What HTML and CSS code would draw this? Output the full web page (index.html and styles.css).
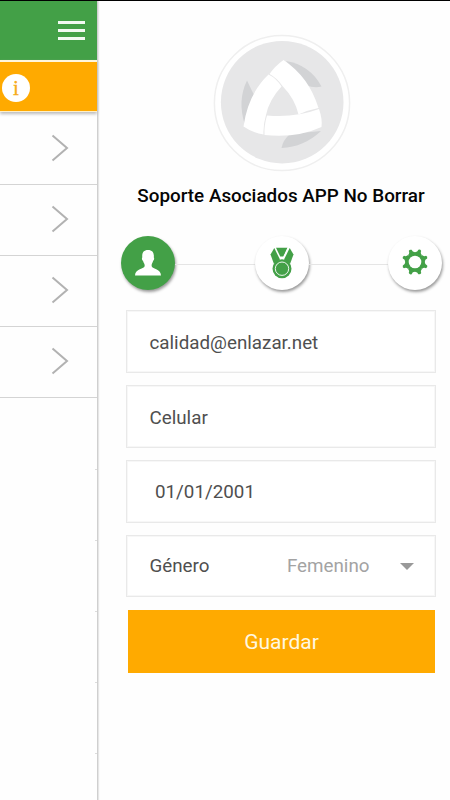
FILE: index.html
```html
<!DOCTYPE html>
<html lang="es">
<head>
<meta charset="utf-8">
<title>Perfil</title>
<link rel="stylesheet" href="styles.css">
</head>
<body>
<div class="app">
  <aside class="page">
    <header class="topbar">
      <div class="menu"><span></span><span></span><span></span></div>
    </header>
    <div class="notice"><span class="info">i</span></div>
    <ul class="list">
      <li><svg width="18" height="28" viewBox="0 0 18 28"><path d="M1.500 1.500 16 14 1.500 26.500"/></svg></li>
      <li><svg width="18" height="28" viewBox="0 0 18 28"><path d="M1.500 1.500 16 14 1.500 26.500"/></svg></li>
      <li><svg width="18" height="28" viewBox="0 0 18 28"><path d="M1.500 1.500 16 14 1.500 26.500"/></svg></li>
      <li><svg width="18" height="28" viewBox="0 0 18 28"><path d="M1.500 1.500 16 14 1.500 26.500"/></svg></li>
    </ul>
    <div class="ticks"><i></i><i></i><i></i><i></i><i></i></div>
  </aside>
  <main class="panel">
    <svg class="avatar" width="140" height="140" viewBox="0 0 140 140">
      <circle cx="70" cy="70" r="67.600" fill="#fff" stroke="#efefef" stroke-width="1.500"/>
      <circle cx="70.200" cy="69.200" r="61.300" fill="#e7e7e8"/>
      <g fill="#d2d3d5">
        <path d="M74 28Q98 32 109.500 53.500Q102 55.500 94 52Z"/>
        <path d="M35 47.500L42 62L33 92Q25 68 35 47.500Z"/>
        <path d="M109 98Q92 114 69.500 115Q71 107 78 101Z"/>
      </g>
      <g fill="#fff">
        <path d="M57.500 41Q63 33 71.500 27Q97 44 106.500 75Q96 77 86.500 81.500Q83 66 70.500 53Q65 45 57.500 41Z"/>
        <path d="M56.500 41.500Q64 45 69.500 53.500Q57 67 54 82Q51 92 51.500 101.500Q41 100 31.500 93.500Q36 61 56.500 41.500Z"/>
        <path d="M55 82.500Q83 85 107 76Q110.500 86 109.500 94Q84 105.500 52.500 102Q52 92 55 82.500Z"/>
      </g>
    </svg>
    <h1>Soporte Asociados APP No Borrar</h1>
    <nav class="steps">
      <div class="step active">
        <svg width="28" height="28" viewBox="0 0 28 28" fill="#fff"><path d="M14 1C18.500 1 20.300 3.900 19.800 8.500C20.600 9 19.900 11.300 19.100 11.800C18.600 14 17.600 14.700 17.600 16.700C17.600 20.500 27 19 27 26.500H1C1 19 10.700 20.500 10.700 16.700C10.700 14.700 9.500 14 9 11.800C8.100 11.300 7.500 9 8.300 8.500C7.800 3.900 9.500 1 14 1Z"/></svg>
      </div>
      <span class="line"></span>
      <div class="step">
        <svg width="24" height="32" viewBox="0 0 24 32" fill="#43a047"><path d="M4.300 1 10 12.500 4 17 .5 7.500Z"/><path d="M19.700 1 14 12.500 20 17 23.500 7.500Z"/><path d="M6 .8H17.500L13.300 9.500H10.200Z"/><path d="M13.700 10.500 18 1" stroke="#fff"/><circle cx="12" cy="21.700" r="9.500"/><circle cx="12" cy="21.700" r="6.700" fill="none" stroke="#fff" stroke-width=".9"/></svg>
      </div>
      <span class="line"></span>
      <div class="step gear">
        <svg width="26" height="26" viewBox="-13 -13 26 26"><g fill="#43a047"><circle r="9"/><path id="tooth" d="M0 0H9.800Q9.800 2.600 12.200 3.400Q12.900 5.200 11 6.200Q8.800 5.100 6.900 6.900Z"/><use href="#tooth" transform="rotate(45)"/><use href="#tooth" transform="rotate(90)"/><use href="#tooth" transform="rotate(135)"/><use href="#tooth" transform="rotate(180)"/><use href="#tooth" transform="rotate(225)"/><use href="#tooth" transform="rotate(270)"/><use href="#tooth" transform="rotate(315)"/></g><circle r="6.300" fill="#fff"/></svg>
      </div>
    </nav>
    <form class="form">
      <div class="field">calidad@enlazar.net</div>
      <div class="field phone">Celular</div>
      <div class="field date">01/01/2001</div>
      <div class="field gender"><span>Género</span><span class="value">Femenino</span><i class="caret"></i></div>
      <button type="button">Guardar</button>
    </form>
  </main>
</div>
</body>
</html>
```
FILE: styles.css
```css
* { box-sizing: border-box; }
body { margin: 0; background: #fefefe; font-family: Roboto, sans-serif; }
.app { display: flex; width: 450px; height: 800px; overflow: hidden; border-top: 1px solid #000; }

.page { width: 98px; border-right: 1px solid #cfcfcf; box-shadow: 1px 0 1px #e6e6e6; }
.topbar { height: 59px; background: #43a047; display: flex; justify-content: flex-end; padding: 20px 12px 0 0; }
.menu { width: 27px; display: flex; flex-direction: column; gap: 5px; }
.menu span { height: 3px; background: #f2faf2; }
.notice { height: 52px; border-top: 2px solid #fff6dc; border-bottom: 1px solid #fff0c8; background: #ffaa00; padding: 12px 0 0 2px; box-shadow: 0 2px 3px #bbb; }
.info { display: block; width: 28px; height: 28px; border-radius: 50%; background: #fff; color: #f6ab1c; font: 21px/28px "Liberation Serif", serif; text-align: center; -webkit-text-stroke: .3px #f6ab1c; }
.list { list-style: none; margin: 0; padding: 0; }
.list li { height: 71px; border-bottom: 1px solid #d4d4d4; display: flex; align-items: center; justify-content: flex-end; padding: 0 28px 2px 0; }
.list li:first-child { height: 73px; padding-bottom: 0; }
.list svg { fill: none; stroke: #b2b2b2; stroke-width: 2; }
.ticks { display: flex; flex-direction: column; align-items: flex-end; gap: 70px; padding-top: 71px; }
.ticks i { width: 2px; height: 1px; background: #dcdcdc; }

.panel { flex: 1; display: flex; flex-direction: column; padding: 32px 14px 0 28px; }
.avatar { align-self: center; margin-left: 2px; }
h1 { margin: 11px 0 0; font-size: 18.85px; line-height: 24px; font-weight: 500; color: #050505; text-align: center; white-space: nowrap; }
.steps { display: flex; align-items: center; margin: 28px -6px 0 -5px; height: 54px; }
.step { width: 54px; height: 54px; border-radius: 50%; background: #fff; box-shadow: 1px 2px 3px #999; display: flex; align-items: center; justify-content: center; flex: none; }
.step.active { background: #43a047; }
.gear { padding: 0 1px 2px 0; }
.line { flex: 1; height: 1px; background: #e5e5e5; margin-top: 3px; }
.form { display: flex; flex-direction: column; margin-top: 20px; color: #4f4f4f; font-size: 18.8px; }
.field { height: 63px; margin-bottom: 12px; border: 1px solid #e9e9e9; box-shadow: inset 0 0 0 1px #f7f7f7; background: #fff; padding: 0 22.5px; line-height: 64px; }
.phone { line-height: 65px; }
.date { padding-left: 28px; line-height: 62px; }
.gender { display: flex; align-items: center; height: 62px; line-height: 56px; }
.value { margin-left: auto; color: #a3a3a3; }
.caret { margin: 0 -1px 0 30px; border: 7px solid transparent; border-top-color: #999; border-bottom: 0; }
button { height: 63px; margin: 1px 1px 0 2px; border: 0; background: #ffaa00; color: #fff8e0; font: 21px/64px Roboto, sans-serif; padding: 0; }
```
